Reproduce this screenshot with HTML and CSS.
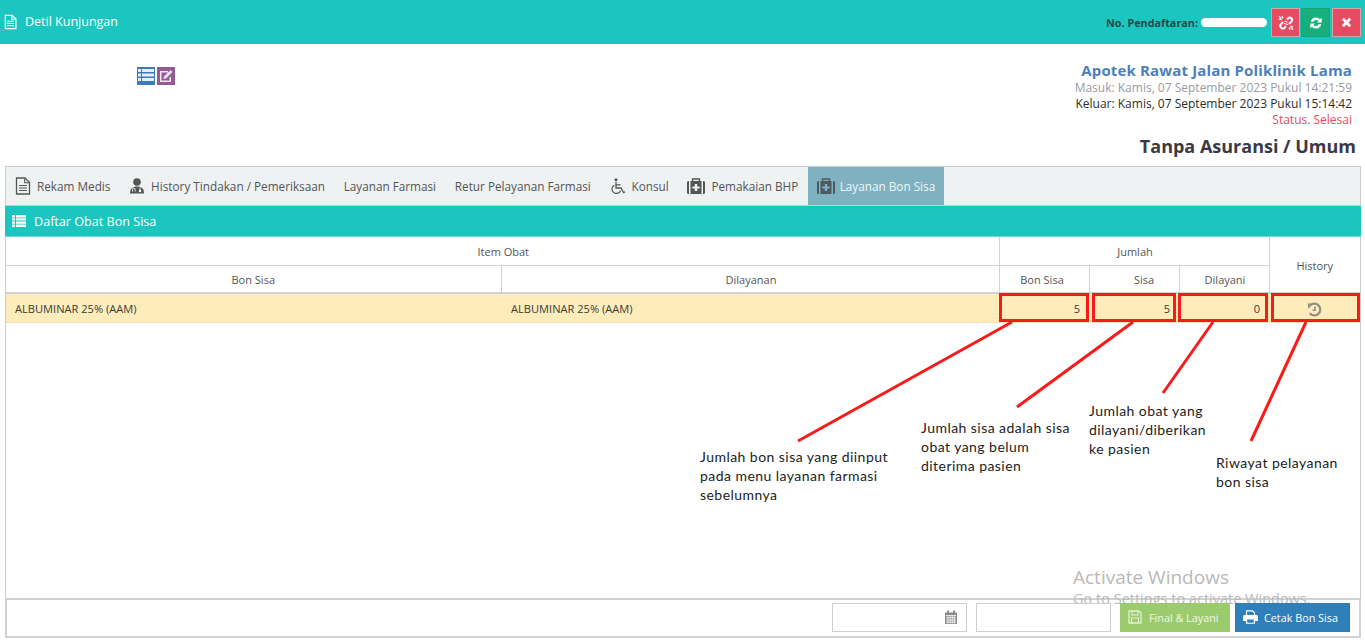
FILE: index.html
```html
<!DOCTYPE html>
<html lang="id">
<head>
<meta charset="utf-8">
<title>Detil Kunjungan</title>
<link rel="stylesheet" href="styles.css">
</head>
<body>
<div class="page">
  <header class="topbar">
    <div class="topbar-title">
      <svg class="ic-doc" viewBox="0 0 14 16"><path d="M1.500.8h7.300l4 4v10.400H1.500z" fill="none" stroke="#fff" stroke-width="1.400"/><path d="M8.500 1v4h4" fill="none" stroke="#fff" stroke-width="1.200"/><path d="M3.500 7.300h7M3.500 9.600h7M3.500 11.900h7" stroke="#fff" stroke-width="1.200"/></svg>
      <span>Detil Kunjungan</span>
    </div>
    <div class="topbar-right">
      <span class="reg-label">No. Pendaftaran:</span>
      <span class="reg-mask"></span>
      <button class="tbtn tbtn-red"><svg viewBox="0 0 16 16" width="16" height="16"><path d="M9 4.500 10.500 3a2.300 2.300 0 0 1 2.500 0l.5.500a2.300 2.300 0 0 1 0 3L11 9M5 7 2.800 9.300a2.300 2.300 0 0 0 0 3l.6.600a2.300 2.300 0 0 0 3 0L8 11.300" fill="none" stroke="#fff" stroke-width="2"/><path d="M4 .8l.8 2.700M.8 4l2.700.8M1 1.500l2.500 2.200M12 15.200l-.8-2.700M15.200 12l-2.700-.8M15 14.500l-2.500-2.200M6.500 6l3 1M6 8.500l4 1" stroke="#fff" stroke-width="1.200"/></svg></button>
      <button class="tbtn tbtn-green"><svg viewBox="0 0 16 16" width="14" height="14"><path d="M2 6.500A6 6 0 0 1 12.500 3.800L14.500 2v5.500H9l2-2A3.800 3.800 0 0 0 5 6.500zM14 9.500A6 6 0 0 1 3.500 12.200L1.500 14V8.500H7l-2 2A3.800 3.800 0 0 0 11 9.500z" fill="#fff"/></svg></button>
      <button class="tbtn tbtn-red tbtn-close"><svg viewBox="0 0 12 12" width="11" height="11"><path d="M2 2l8 8M10 2l-8 8" stroke="#fff" stroke-width="3"/></svg></button>
    </div>
  </header>

  <section class="info">
    <div class="info-actions">
      <span class="sq sq-blue"><svg viewBox="0 0 18 18" width="18" height="18"><path d="M1 2h3v3H1zM5 2h12v3H5zM1 6.500h3v3H1zM5 6.500h12v3H5zM1 11h3v3H1zM5 11h12v3H5z" fill="#e8eef6"/></svg></span>
      <span class="sq sq-purple"><svg viewBox="0 0 18 18" width="18" height="18"><path d="M3 4h8v1.500H4.500v8h8V10H14v5H3z" fill="#eee3ee"/><path d="M7 9.500 13.500 3l2 2L9 11.500l-2.500.5z" fill="#eee3ee"/></svg></span>
    </div>
    <div class="info-text">
      <div class="unit">Apotek Rawat Jalan Poliklinik Lama</div>
      <div class="in">Masuk: Kamis, 07 September 2023 Pukul 14:21:59</div>
      <div class="out">Keluar: Kamis, 07 September 2023 Pukul 15:14:42</div>
      <div class="status">Status. Selesai</div>
      <div class="payer">Tanpa Asuransi / Umum</div>
    </div>
  </section>

  <main class="content">
    <nav class="tabs">
      <a class="tab"><svg class="tic" viewBox="0 0 16 18" width="16" height="18"><path d="M1.500 1h8.500l4.500 4.500V17h-13z" fill="none" stroke="#555" stroke-width="1.300"/><path d="M9.700 1.200v4.500h4.500" fill="none" stroke="#555" stroke-width="1.100"/><path d="M4 8.500h8M4 11h8M4 13.500h8" stroke="#555" stroke-width="1.200"/></svg>Rekam Medis</a>
      <a class="tab"><svg class="tic" viewBox="0 0 16 16" width="16" height="16"><circle cx="8" cy="4" r="3.800" fill="#555"/><path d="M1 15.500c0-5 2.500-7 7-7s7 2 7 7z" fill="#555"/><path d="M3.500 13.500v-2a1.300 1.300 0 0 1 2.600 0v2M11 9.500v2.300" fill="none" stroke="#fff" stroke-width=".9"/><circle cx="11" cy="13" r="1.200" fill="#fff"/></svg>History Tindakan / Pemeriksaan</a>
      <a class="tab">Layanan Farmasi</a>
      <a class="tab">Retur Pelayanan Farmasi</a>
      <a class="tab"><svg class="tic" viewBox="0 0 16 16" width="16" height="16"><circle cx="6" cy="1.700" r="1.500" fill="#555"/><path d="M6 4v6h5l2.500 4.500 1.500-.7M6 6.800h4.500" fill="none" stroke="#555" stroke-width="1.300"/><path d="M4.300 7.200a4.400 4.400 0 1 0 6.200 5.500" fill="none" stroke="#555" stroke-width="1.200"/></svg>Konsul</a>
      <a class="tab"><svg class="tic" viewBox="0 0 18 16" width="18" height="16"><path d="M5.500 3V1h7v2" fill="none" stroke="#555" stroke-width="1.400"/><path d="M0 4.500A1.500 1.500 0 0 1 1.500 3H2v13h-.5A1.500 1.500 0 0 1 0 14.500zM18 4.500A1.500 1.500 0 0 0 16.500 3H16v13h.5a1.500 1.500 0 0 0 1.500-1.500z" fill="#555"/><path fill-rule="evenodd" d="M3.500 3h11v13h-11zM7.800 6v2.500H5.300v2h2.500V13h2.400v-2.500h2.500v-2h-2.500V6z" fill="#555"/></svg>Pemakaian BHP</a>
      <a class="tab tab-active"><svg class="tic" viewBox="0 0 18 16" width="18" height="16"><path d="M5.500 3V1h7v2" fill="none" stroke="#4c5a60" stroke-width="1.400"/><path d="M0 4.500A1.500 1.500 0 0 1 1.500 3H2v13h-.5A1.500 1.500 0 0 1 0 14.500zM18 4.500A1.500 1.500 0 0 0 16.500 3H16v13h.5a1.500 1.500 0 0 0 1.500-1.500z" fill="#4c5a60"/><path fill-rule="evenodd" d="M3.500 3h11v13h-11zM7.800 6v2.500H5.300v2h2.500V13h2.400v-2.500h2.500v-2h-2.500V6z" fill="#4c5a60"/></svg>Layanan Bon Sisa</a>
    </nav>
    <div class="panel-head">
      <svg viewBox="0 0 14 12" width="14" height="12"><path d="M0 0h3v2.400H0zM4 0h10v2.400H4zM0 3.200h3v2.400H0zM4 3.200h10v2.400H4zM0 6.400h3v2.400H0zM4 6.400h10v2.400H4zM0 9.600h3V12H0zM4 9.600h10V12H4z" fill="#fff"/></svg>
      <span>Daftar Obat Bon Sisa</span>
    </div>
    <div class="table-wrap">
      <table class="grid">
        <colgroup><col class="c-item"><col class="c-item2"><col class="c-num"><col class="c-num"><col class="c-num"><col class="c-hist"></colgroup>
        <thead>
          <tr><th class="th-shift" colspan="2">Item Obat</th><th class="th-shift" colspan="3">Jumlah</th><th rowspan="2">History</th></tr>
          <tr><th>Bon Sisa</th><th class="th-shift">Dilayanan</th><th class="th-bon">Bon Sisa</th><th class="th-sisa">Sisa</th><th class="th-shift">Dilayani</th></tr>
        </thead>
        <tbody>
          <tr class="row-warn">
            <td>ALBUMINAR 25% (AAM)</td><td class="td-second">ALBUMINAR 25% (AAM)</td>
            <td class="num">5</td><td class="num">5</td><td class="num">0</td>
            <td class="hist"><svg viewBox="0 0 16 16" width="15" height="15"><path d="M3.800 3.200A6.300 6.300 0 1 1 3 12" fill="none" stroke="#8f8f84" stroke-width="2.400"/><path d="M.8 1.200 6.800 1.800 1.300 7.200z" fill="#8f8f84"/><path d="M8.500 4.800V8.800H6" fill="none" stroke="#8f8f84" stroke-width="1.700"/></svg></td>
          </tr>
        </tbody>
      </table>
    </div>
    <footer class="foot">
      <div class="field field-date"><svg viewBox="0 0 14 14" width="14" height="14"><path d="M1 2.500h12V14H1z" fill="#8b8b8b"/><path d="M3 .5h2v3.200H3zM9 .5h2v3.200H9z" fill="#8b8b8b"/><path d="M2 5.500h10M2 7.800h10M2 10.100h10M2 12.300h10M4 5v8.500M6.200 5v8.500M8.300 5v8.500M10.400 5v8.500" stroke="#eee" stroke-width=".9"/></svg></div>
      <div class="field field-plain"></div>
      <button class="fbtn fbtn-green"><svg viewBox="0 0 14 14" width="14" height="14"><path d="M1 1h10l2 2v10H1z" fill="none" stroke="#e3f0d2" stroke-width="1.300"/><path d="M4 1.500v3.500h6V1.500M3.500 13V8h7v5" fill="none" stroke="#e3f0d2" stroke-width="1.100"/></svg>Final &amp; Layani</button>
      <button class="fbtn fbtn-blue"><svg viewBox="0 0 15 14" width="15" height="14"><path d="M3.500 5V.8h6l2 2V5" fill="none" stroke="#fff" stroke-width="1.200"/><path d="M0 6.500A1.500 1.500 0 0 1 1.500 5h12A1.500 1.500 0 0 1 15 6.500V11h-3v2.800H3V11H0z" fill="#fff"/><path d="M4.200 9.500h6.600v3.200H4.200z" fill="#2f7fbb"/></svg>Cetak Bon Sisa</button>
    </footer>
  </main>

  <div class="mark mark-1"></div>
  <div class="mark mark-2"></div>
  <div class="mark mark-3"></div>
  <div class="mark mark-4"></div>
  <svg class="callouts" viewBox="0 0 1365 642" width="1365" height="642">
    <path d="M1012 322 798 441M1133 322 1017 407M1213 322 1163 393M1306 322 1251 441" stroke="#fb1a1a" stroke-width="3" fill="none"/>
  </svg>
  <p class="note note-1">Jumlah bon sisa yang diinput<br>pada menu layanan farmasi<br>sebelumnya</p>
  <p class="note note-2">Jumlah sisa adalah sisa<br>obat yang belum<br>diterima pasien</p>
  <p class="note note-3">Jumlah obat yang<br>dilayani/diberikan<br>ke pasien</p>
  <p class="note note-4">Riwayat pelayanan<br>bon sisa</p>
  <div class="activate"><div class="a1">Activate Windows</div><div class="a2">Go to Settings to activate Windows.</div></div>
</div>
</body>
</html>
```
FILE: styles.css
```css
* { box-sizing: border-box; }
html, body { margin: 0; padding: 0; height: 100%; overflow: hidden; background: #fff; }
body { font-family: "Open Sans", "Liberation Sans", sans-serif; font-size: 11px; color: #333; }
.page { position: relative; width: 1365px; height: 642px; display: flex; flex-direction: column; overflow: hidden; }

.topbar { height: 44px; flex: none; background: #1ac6bf; display: flex; align-items: flex-start; justify-content: space-between; padding: 8px 4px 0 4px; }
.topbar-title { display: flex; align-items: center; gap: 8px; height: 27px; color: #fff; font-size: 12.5px; }
.ic-doc { width: 13px; height: 16px; }
.topbar-right { display: flex; align-items: center; }
.reg-label { font-size: 10.8px; font-weight: 700; color: #264a4a; margin-right: 3px; }
.reg-mask { width: 66px; height: 9px; border-radius: 5px; background: #fff; margin-right: 4px; }
.tbtn { width: 29px; height: 29px; border: 1px solid #c9c9c9; padding: 0; display: flex; align-items: center; justify-content: center; margin-left: 1px; }
.tbtn-red { background: #e84a5f; border-color: #d5a3a8; }
.tbtn-green { background: #17b07c; border-color: #19a27c; }
.tbtn-close { margin-left: 2px; }
.reg-mask + .tbtn { margin-left: 0; }

.info { height: 122px; flex: none; display: flex; justify-content: space-between; padding: 23px 9px 0 137px; }
.info-actions { display: flex; gap: 2px; }
.sq { width: 18px; height: 18px; display: block; }
.sq-blue { background: #3c7ab8; }
.sq-purple { background: #945b92; }
.info-text { text-align: right; font-size: 12px; line-height: 16px; }
.unit { font-size: 15px; font-weight: 700; color: #4d7fbd; line-height: 20px; margin-top: -7px; padding-right: 4px; letter-spacing: .15px; }
.in { color: #9a9aa3; padding-right: 4px; }
.out { color: #2c2c2c; padding-right: 4px; }
.status { color: #e84a5f; padding-right: 4px; }
.payer { font-size: 18px; font-weight: 700; color: #3a3a46; line-height: 24px; margin-top: 6px; }

.content { flex: none; height: 472px; margin: 0 4px 0 5px; display: flex; flex-direction: column; }
.tabs { height: 40px; flex: none; display: flex; background: #eef2f2; border: 1px solid #ccc; font-size: 11.75px; }
.tab { display: flex; align-items: center; gap: 6px; padding: 0 9.35px; color: #555; white-space: nowrap; }
.tic { flex: none; }
.tab:first-child { padding-left: 9px; }
.tab-active { background: #7fb1c0; color: #eef6f8; padding: 0 9px; gap: 5px; }
.panel-head { height: 31px; flex: none; background: #1ac6bf; border-bottom: 1px solid #6fd6d0; display: flex; align-items: center; gap: 8px; padding: 0 0 0 7px; color: #fff; font-size: 12.6px; }
.table-wrap { flex: 1; border: 1px solid #ccc; border-top: 0; border-bottom: 0; }
.grid { width: 100%; border-collapse: collapse; table-layout: fixed; font-size: 11px; }
.c-item { width: 495px; }
.c-item2 { width: 498px; }
.c-num { width: 90px; }
.grid th { font-weight: 400; color: #555; height: 28px; padding: 2px 0 0; border: 1px solid #d2d2d2; border-top: 0; text-align: center; }
.grid th:first-child { border-left: 0; }
.grid th:last-child { border-right: 0; }
.grid thead tr:last-child th { border-bottom: 2px solid #d2d2d2; }
.grid .th-shift { padding-left: 2px; }
.th-bon { padding-right: 4px !important; }
.th-sisa { padding-left: 20px !important; }
.grid th[rowspan] { border-bottom: 2px solid #d2d2d2; border-right: 0; }
.row-warn td { background: #feecbb; height: 29px; padding: 2px 9px 0; border-bottom: 1px solid #f2e2b2; color: #3c3c3c; font-size: 11.1px; }
.row-warn td.td-second { padding-left: 10px; }
.row-warn td.num { text-align: right; padding-right: 9px; }
.row-warn td.hist { text-align: center; padding: 3px 0 0; }
.row-warn td.hist svg { display: block; margin: 0 auto; }

.foot { height: 40px; flex: none; border: 2px solid #d2d2d2; display: flex; align-items: center; justify-content: flex-end; padding: 0 9px 2px 0; }
.field { position: relative; z-index: 2; height: 29px; border: 1px solid #cfcfcf; background: #fff; }
.field-date { width: 135px; display: flex; align-items: center; justify-content: flex-end; padding-right: 8px; margin-right: 9px; }
.field-plain { width: 135px; margin-right: 9px; }
.fbtn { position: relative; z-index: 2; height: 29px; border: 0; color: #fff; font: 10.8px "Open Sans", sans-serif; display: flex; align-items: center; justify-content: flex-start; padding: 0 0 0 8px; white-space: nowrap; }
.fbtn-green { width: 110px; gap: 7px; background: #9ccb6d; color: #f0f7e7; margin-right: 5px; }
.fbtn-blue { width: 115px; gap: 6px; background: #2f7fbb; }

.mark { position: absolute; top: 293px; height: 29px; border: 3px solid #fb1a1a; }
.mark-1 { left: 999px; width: 90px; }
.mark-2 { left: 1092px; width: 84px; }
.mark-3 { left: 1178px; width: 90px; }
.mark-4 { left: 1271px; width: 89px; }
.callouts { position: absolute; left: 0; top: 0; pointer-events: none; }
.note { position: absolute; margin: 0; font-family: Lato, "Open Sans", sans-serif; font-size: 14px; line-height: 19px; color: #1c1c1c; letter-spacing: .45px; white-space: nowrap; }
.note-1 { left: 700px; top: 447px; }
.note-2 { left: 921px; top: 418px; }
.note-3 { left: 1089px; top: 401px; }
.note-4 { left: 1216px; top: 453px; }
.activate { position: absolute; z-index: 1; left: 1073px; top: 564px; color: #b9b9b9; pointer-events: none; }
.a1 { font-family: "Open Sans", sans-serif; font-size: 19px; line-height: 26px; }
.a2 { font-size: 14.5px; line-height: 18px; white-space: nowrap; }
```
